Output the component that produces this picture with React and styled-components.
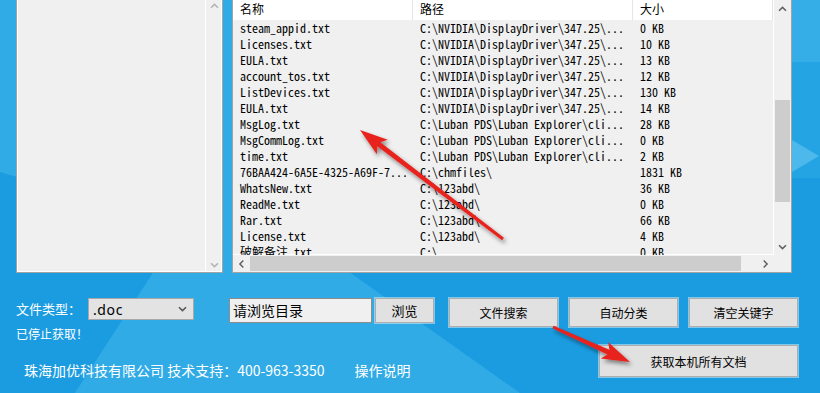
import React from 'react';
import styled, { createGlobalStyle } from 'styled-components';

const GlobalStyle = createGlobalStyle`
  html, body {
    margin: 0;
    padding: 0;
  }
  body {
    width: 820px;
    height: 393px;
    overflow: hidden;
    font-family: "Noto Sans CJK SC", "Noto Sans", sans-serif;
  }
`;

const Desktop = styled.div`
  position: relative;
  width: 820px;
  height: 393px;
  overflow: hidden;
  background: #1b9ce1;
`;

const Wallpaper = styled.svg`
  position: absolute;
  inset: 0;
  z-index: 0;
`;

const ArrowLayer = styled.svg`
  position: absolute;
  inset: 0;
  z-index: 2;
  pointer-events: none;
`;

const Content = styled.div`
  position: relative;
  z-index: 1;
  display: flex;
  flex-direction: column;
  height: 100%;
`;

const TopRow = styled.div`
  display: flex;
  gap: 9px;
  padding-left: 16px;
  height: 273px;
`;

const ListBox = styled.div`
  width: 207px;
  box-sizing: border-box;
  border: 1px solid #a3a3a3;
  border-top: none;
  background: #f0f0f0;
  box-shadow: inset 1px 0 #fff, inset -1px -1px #fff;
  display: flex;
`;

const ListBody = styled.div`
  flex: 1;
`;

const VTrack = styled.div`
  width: 16px;
  border-left: 1px solid #fff;
  display: flex;
  flex-direction: column;
  align-items: center;
  justify-content: space-between;
  padding: 3px 0 4px;
`;

const TableBox = styled.div`
  width: 560px;
  box-sizing: border-box;
  border: 1px solid #a3a3a3;
  border-top: none;
  background: #f0f0f0;
  display: grid;
  grid-template-columns: 541px 17px;
  grid-template-rows: 255px 17px;
`;

const TableArea = styled.div`
  overflow: hidden;
  box-shadow: inset -1px -1px #fff;
`;

const HeaderRow = styled.div`
  display: grid;
  grid-template-columns: 180px 220px 140px;
  height: 20px;
  background: #fff;
`;

const HeaderCell = styled.div`
  padding-left: 7px;
  border-right: 1px solid #e5e5e5;
  font-size: 12px;
  line-height: 18px;
  color: #000;
`;

const Row = styled.div`
  display: grid;
  grid-template-columns: 180px 220px 140px;
  height: 16px;
`;

const Cell = styled.div`
  padding-left: 7px;
  font-family: "Noto Sans Mono CJK SC", "Liberation Mono", monospace;
  font-size: 12px;
  line-height: 16px;
  color: #000;
  white-space: pre;
  overflow: hidden;
`;

const ScrollV = styled.div`
  display: flex;
  flex-direction: column;
  align-items: center;
  background: #f0f0f0;
`;

const ScrollH = styled.div`
  display: flex;
  align-items: center;
  background: #f0f0f0;
`;

const ArrowBox = styled.div`
  width: 17px;
  height: 17px;
  display: flex;
  align-items: center;
  justify-content: center;
  flex: none;
`;

const ThumbV = styled.div`
  width: 15px;
  height: ${({ $size }) => $size}px;
  margin-top: ${({ $offset }) => $offset}px;
  background: #cdcdcd;
`;

const ThumbH = styled.div`
  height: 15px;
  width: ${({ $size }) => $size}px;
  margin-left: ${({ $offset }) => $offset}px;
  background: #cdcdcd;
`;

const Filler = styled.div`
  flex: 1;
`;

const Corner = styled.div`
  background: #f0f0f0;
`;

const Bottom = styled.div`
  display: flex;
  padding: 25px 0 0 16px;
`;

const LeftCol = styled.div`
  display: flex;
  flex-direction: column;
  width: 418px;
`;

const ControlRow = styled.div`
  display: flex;
  align-items: flex-start;
  height: 25px;
`;

const Label = styled.span`
  width: 72px;
  font-size: 13px;
  line-height: 22px;
  color: #fff;
  white-space: nowrap;
`;

const Select = styled.div`
  width: 106px;
  height: 22px;
  box-sizing: border-box;
  border: 1px solid #a8a8a8;
  background: #e3e3e3;
  display: flex;
  align-items: center;
  justify-content: space-between;
  padding: 0 6px 0 4px;
  font-family: "Noto Sans", sans-serif;
  font-size: 14px;
  letter-spacing: 0.6px;
  color: #000;
`;

const TextInput = styled.div`
  width: 143px;
  height: 25px;
  margin-left: 35px;
  box-sizing: border-box;
  border: 1px solid #8d8d8d;
  background: #f0f0f0;
  padding-left: 3px;
  font-size: 14px;
  line-height: 23px;
  color: #000;
`;

const Button = styled.div`
  width: ${({ $w }) => $w}px;
  height: ${({ $h }) => $h}px;
  margin-left: ${({ $ml = 0 }) => $ml}px;
  box-sizing: border-box;
  border: 1px solid #adadad;
  box-shadow: 0 0 0 1px rgba(255, 255, 255, 0.45);
  background: #e1e1e1;
  display: flex;
  align-items: center;
  justify-content: center;
  font-size: ${({ $fs = 12 }) => $fs}px;
  color: #000;
  flex: none;
`;

const Status = styled.div`
  margin-top: 3px;
  font-size: 12px;
  line-height: 16px;
  color: #fff;
`;

const Footer = styled.div`
  margin-top: 19px;
  padding-left: 8px;
  display: flex;
  gap: 30px;
  font-size: 14px;
  line-height: 18px;
  color: #fff;
  white-space: pre;
`;

const RightCol = styled.div`
  display: flex;
  flex-direction: column;
  align-items: flex-end;
  margin-left: 15px;
  width: 349px;
`;

const ButtonRow = styled.div`
  display: flex;
  gap: 11px;
`;

const BigButtonWrap = styled.div`
  margin-top: 18px;
`;

const Chevron = ({ dir = 'down', color = '#606060' }) => {
  const rot = { up: 180, down: 0, left: 90, right: -90 }[dir];
  return (
    <svg width="9" height="6" viewBox="0 0 9 6" style={{ transform: `rotate(${rot}deg)` }}>
      <path d="M1 1.2 L4.5 4.6 L8 1.2" fill="none" stroke={color} strokeWidth="1.5" />
    </svg>
  );
};

const nv = 'C:\\NVIDIA\\DisplayDriver\\347.25\\...';
const lb = 'C:\\Luban PDS\\Luban Explorer\\cli...';
const ab = 'C:\\123abd\\';

const rows = [
  ['steam_appid.txt', nv, '0 KB'],
  ['Licenses.txt', nv, '10 KB'],
  ['EULA.txt', nv, '13 KB'],
  ['account_tos.txt', nv, '12 KB'],
  ['ListDevices.txt', nv, '130 KB'],
  ['EULA.txt', nv, '14 KB'],
  ['MsgLog.txt', lb, '28 KB'],
  ['MsgCommLog.txt', lb, '0 KB'],
  ['time.txt', lb, '2 KB'],
  ['76BAA424-6A5E-4325-A69F-7...', 'C:\\chmfiles\\', '1831 KB'],
  ['WhatsNew.txt', ab, '36 KB'],
  ['ReadMe.txt', ab, '0 KB'],
  ['Rar.txt', ab, '66 KB'],
  ['License.txt', ab, '4 KB'],
  ['破解备注.txt', 'C:\\', '0 KB'],
];

const RedArrow = ({ tail, tip }) => {
  const dx = tip[0] - tail[0];
  const dy = tip[1] - tail[1];
  const len = Math.hypot(dx, dy);
  const ux = dx / len;
  const uy = dy / len;
  const px = -uy;
  const py = ux;
  const bx = tip[0] - 28 * ux;
  const by = tip[1] - 28 * uy;
  const nx = tip[0] - 22 * ux;
  const ny = tip[1] - 22 * uy;
  const head = [
    `${tip[0]},${tip[1]}`,
    `${bx + 9 * px},${by + 9 * py}`,
    `${nx},${ny}`,
    `${bx - 9 * px},${by - 9 * py}`,
  ].join(' ');
  const shaft = [
    `${tail[0] + 1.5 * px},${tail[1] + 1.5 * py}`,
    `${nx + 2.5 * px},${ny + 2.5 * py}`,
    `${nx - 2.5 * px},${ny - 2.5 * py}`,
    `${tail[0] - 1.5 * px},${tail[1] - 1.5 * py}`,
  ].join(' ');
  return (
    <g filter="url(#arrowShadow)">
      <polygon points={shaft} fill="#e8201b" />
      <polygon points={head} fill="#e8201b" />
    </g>
  );
};

const App = () => (
  <Desktop>
    <GlobalStyle />
    <Wallpaper width="820" height="393">
      <polygon points="0,0 250,0 238,240 0,172" fill="#31abe6" />
      <polygon points="75,393 215,177 520,393" fill="#31abe6" />
      <polygon points="792,0 820,0 820,62 792,62" fill="#35aee8" />
      <polygon points="792,62 820,62 820,178 792,178" fill="#25a4e4" />
      <polygon points="792,140 819,156 792,172" fill="#4cb8ec" />
    </Wallpaper>
    <Content>
      <TopRow>
        <ListBox>
          <ListBody />
          <VTrack>
            <Chevron dir="up" color="#b4b4b4" />
            <Chevron dir="down" color="#b4b4b4" />
          </VTrack>
        </ListBox>
        <TableBox>
          <TableArea>
            <HeaderRow>
              <HeaderCell>名称</HeaderCell>
              <HeaderCell>路径</HeaderCell>
              <HeaderCell>大小</HeaderCell>
            </HeaderRow>
            {rows.map((r, i) => (
              <Row key={i}>
                <Cell>{r[0]}</Cell>
                <Cell>{r[1]}</Cell>
                <Cell>{r[2]}</Cell>
              </Row>
            ))}
          </TableArea>
          <ScrollV>
            <ArrowBox>
              <Chevron dir="up" />
            </ArrowBox>
            <ThumbV $offset={83} $size={102} />
            <Filler />
            <ArrowBox>
              <Chevron dir="down" />
            </ArrowBox>
          </ScrollV>
          <ScrollH>
            <ArrowBox>
              <Chevron dir="left" />
            </ArrowBox>
            <ThumbH $offset={0} $size={491} />
            <Filler />
            <ArrowBox>
              <Chevron dir="right" />
            </ArrowBox>
          </ScrollH>
          <Corner />
        </TableBox>
      </TopRow>
      <Bottom>
        <LeftCol>
          <ControlRow>
            <Label>文件类型：</Label>
            <Select>
              <span>.doc</span>
              <Chevron dir="down" color="#555" />
            </Select>
            <TextInput>请浏览目录</TextInput>
            <Button $w={59} $h={25} $ml={3} $fs={13}>浏览</Button>
          </ControlRow>
          <Status>已停止获取！</Status>
          <Footer>
            <span>珠海加优科技有限公司 技术支持：400-963-3350</span>
            <span>操作说明</span>
          </Footer>
        </LeftCol>
        <RightCol>
          <ButtonRow>
            <Button $w={109} $h={29}>文件搜索</Button>
            <Button $w={109} $h={29}>自动分类</Button>
            <Button $w={109} $h={29}>清空关键字</Button>
          </ButtonRow>
          <BigButtonWrap>
            <Button $w={199} $h={32}>获取本机所有文档</Button>
          </BigButtonWrap>
        </RightCol>
      </Bottom>
    </Content>
    <ArrowLayer width="820" height="393">
      <defs>
        <filter id="arrowShadow" x="-20%" y="-20%" width="140%" height="140%">
          <feDropShadow dx="2" dy="3" stdDeviation="2" floodColor="#000" floodOpacity="0.45" />
        </filter>
      </defs>
      <RedArrow tail={[503, 239]} tip={[360, 130]} />
      <RedArrow tail={[553, 327]} tip={[630, 362]} />
    </ArrowLayer>
  </Desktop>
);

export default App;
